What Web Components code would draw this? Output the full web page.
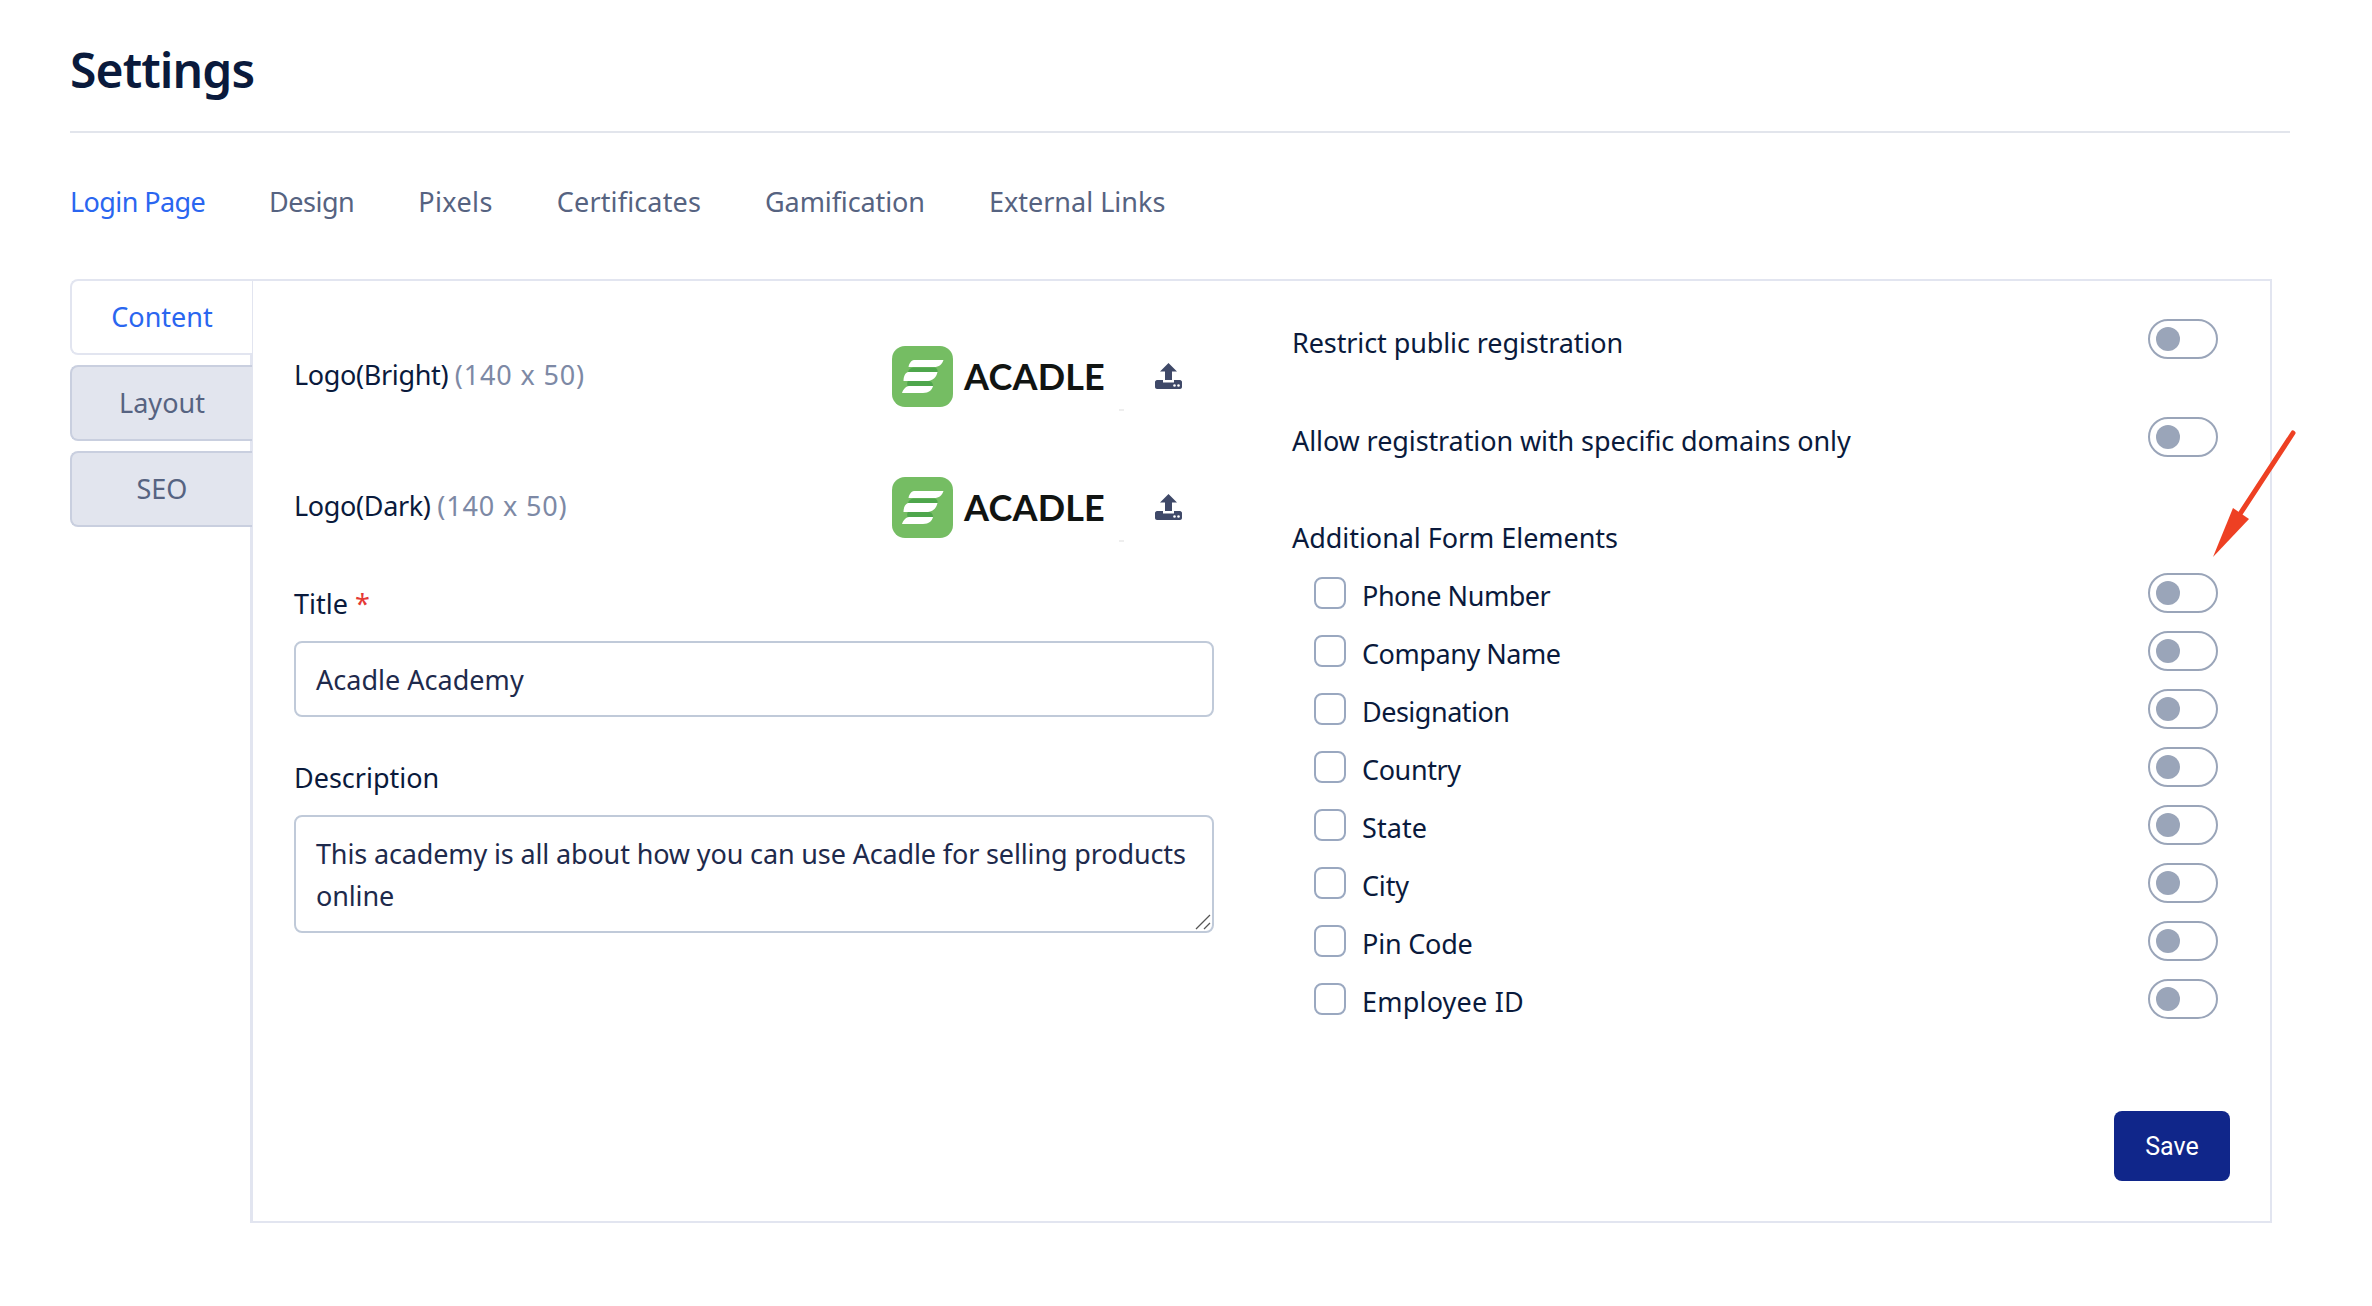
<!DOCTYPE html>
<html>
<head>
<meta charset="utf-8">
<title>Settings</title>
<style>
html, body { margin: 0; padding: 0; background: #fff; }
body { font-family: "Noto Sans", "Liberation Sans", sans-serif; font-size: 27px; color: #0a1a3c; }
</style>
</head>
<body>
<settings-page>
  <span slot="title">Settings</span>
  <nav-link slot="nav" active style="letter-spacing:-.6px">Login Page</nav-link>
  <nav-link slot="nav" style="letter-spacing:-.5px">Design</nav-link>
  <nav-link slot="nav" style="letter-spacing:.4px">Pixels</nav-link>
  <nav-link slot="nav" style="letter-spacing:.15px">Certificates</nav-link>
  <nav-link slot="nav" style="letter-spacing:-.1px">Gamification</nav-link>
  <nav-link slot="nav" style="letter-spacing:0">External Links</nav-link>

  <side-tab slot="side" active>Content</side-tab>
  <side-tab slot="side">Layout</side-tab>
  <side-tab slot="side">SEO</side-tab>

  <logo-row slot="left" hint="(140 x 50)">Logo(Bright)</logo-row>
  <logo-row slot="left" hint="(140 x 50)">Logo(Dark)</logo-row>
  <text-field slot="left" label="Title" required>Acadle Academy</text-field>
  <text-field slot="left" label="Description" multiline>This academy is all about how you can use Acadle for selling products online</text-field>

  <option-row slot="right" plain>Restrict public registration</option-row>
  <option-row slot="right" plain>Allow registration with specific domains only</option-row>
  <form-heading slot="right">Additional Form Elements</form-heading>
  <option-row slot="right" style="letter-spacing:-.45px">Phone Number</option-row>
  <option-row slot="right" style="letter-spacing:-.45px">Company Name</option-row>
  <option-row slot="right" style="letter-spacing:-.5px">Designation</option-row>
  <option-row slot="right" style="letter-spacing:-.4px">Country</option-row>
  <option-row slot="right" style="letter-spacing:.1px">State</option-row>
  <option-row slot="right" style="letter-spacing:-.2px">City</option-row>
  <option-row slot="right" style="letter-spacing:-.2px">Pin Code</option-row>
  <option-row slot="right" style="letter-spacing:.2px">Employee ID</option-row>

  <save-button slot="footer">Save</save-button>
</settings-page>

<script>
(function(){

function define(name, css, html, setup) {
    class El extends HTMLElement {
        constructor() {
            super();
            this.attachShadow({mode:'open'});
            this.shadowRoot.innerHTML = `<style>${css}</style>${html}`;
        }
        connectedCallback() {
            if (setup) setup.call(this, this.shadowRoot);
        }
    }
    customElements.define(name, El);
}

define('settings-page', `
    :host { display: block; position: relative; width: 2372px; height: 1306px; box-sizing: border-box; padding: 0 82px 0 70px; }
    header { height: 131px; border-bottom: 2px solid #e2e5ec; box-sizing: content-box; }
    h1 { margin: 0; padding-top: 42px; font-size: 48px; line-height: 56px; font-weight: 600; color: #0a1a3c; letter-spacing: -.9px; }
    nav { display: flex; gap: 64px; height: 146px; padding-top: 51px; box-sizing: border-box; }
    .body { display: flex; margin-right: 18px; height: 944px; }
    .side { width: 180px; flex: none; display: flex; flex-direction: column; gap: 10px; }
    .panel { flex: 1; border: 2px solid #e2e5f0; border-left-width: 3px; display: flex; flex-direction: column; padding: 0 40px 40px 41px; box-sizing: border-box; }
    .form { display: grid; grid-template-columns: 920px 1fr; column-gap: 78px; }
    .left { padding-top: 65px; display: flex; flex-direction: column; }
    .right { padding: 38px 12px 0 0; display: flex; flex-direction: column; }
    .foot { margin-top: auto; display: flex; justify-content: flex-end; }
    svg.arrow { position: absolute; left: 2200px; top: 420px; pointer-events: none; }
`, `
    <header><h1><slot name="title"></slot></h1></header>
    <nav><slot name="nav"></slot></nav>
    <div class="body">
        <div class="side"><slot name="side"></slot></div>
        <div class="panel">
            <div class="form">
                <div class="left"><slot name="left"></slot></div>
                <div class="right"><slot name="right"></slot></div>
            </div>
            <div class="foot"><slot name="footer"></slot></div>
        </div>
    </div>
    <svg class="arrow" width="100" height="145" viewBox="2200 420 100 145">
        <line x1="2293" y1="433" x2="2240" y2="514" stroke="#ee4023" stroke-width="5" stroke-linecap="round"/>
        <polygon points="2213,557 2233,508 2249,519" fill="#ee4023"/>
    </svg>
`);

define('nav-link', `
    :host { display: block; font-size: 27px; line-height: 36px; color: #566381; }
    :host([active]) { color: #2a66f0; }
`, `<slot></slot>`);

define('side-tab', `
    :host { display: block; position: relative; width: 182px; height: 76px; box-sizing: border-box; line-height: 72px; text-align: center; font-size: 27px;
        background: #e2e5ee; color: #566381; border: 2px solid #c9cfdf; border-right: 0; border-radius: 8px 0 0 8px; }
    :host([active]) { background: #fff; color: #2a66f0; border-color: #e2e5f0; }
`, `<slot></slot>`);

define('acadle-logo', `
    :host { display: block; width: 214px; height: 61px; position: relative; }
    svg { display: block; }
    span { position: absolute; left: 72px; top: 3px; font: 700 36px/54px Lato, "Noto Sans", sans-serif; color: #111412; letter-spacing: .2px; }
    i { position: absolute; left: 227px; top: 63px; width: 5px; height: 2px; background: #eee; }
`, `
    <svg width="61" height="61" viewBox="0 0 61 61">
        <rect width="61" height="61" rx="13" fill="#75bd63"/>
        <path d="M22 14H51.500C50 18.500 47 21 42 21H16.500C17 17.500 19 14.500 22 14Z" fill="#fff"/>
        <path d="M21 21.500H43C45 22 46 24.500 45.500 26H16C16.500 24 18 22 21 21.500Z" fill="#4ea64c"/>
        <path d="M16 26H45.500C44.500 31 41 34.500 36 35H11.500C11.500 30.500 13 27 16 26Z" fill="#fff"/>
        <path d="M16 35H37C39.500 35 41 37.500 41 40H15.500C15 37.500 15 36 16 35Z" fill="#4ea64c"/>
        <path d="M17 40H41C40 44 37 47 31 47H10C11 43.500 13.500 40.500 17 40Z" fill="#fff"/>
    </svg>
    <span>ACADLE</span><i></i>
`);

define('upload-icon', `
    :host { display: block; width: 27px; height: 26px; }
    svg { display: block; }
`, `
    <svg width="27" height="26" viewBox="0 0 27 26">
        <path d="M13.500 0L22 8.500H17V17H10V8.500H5Z" fill="#3f4968"/>
        <path d="M2 17H8V19.500H19V17H25C26 17 27 18 27 19V24C27 25 26 26 25 26H2C1 26 0 25 0 24V19C0 18 1 17 2 17Z" fill="#3f4968"/>
        <circle cx="19.500" cy="22.500" r="1.300" fill="#fff"/>
        <circle cx="23.500" cy="22.500" r="1.300" fill="#fff"/>
    </svg>
`);

define('logo-row', `
    :host { display: flex; align-items: center; height: 61px; margin-bottom: 70px; }
    .txt { width: 598px; flex: none; font-size: 27px; line-height: 36px; margin-top: -4px; color: #0a1a3c; letter-spacing: -.35px; }
    .hint { color: #7d89a5; letter-spacing: .85px; }
    acadle-logo { margin-right: 49px; }
    upload-icon { margin-top: -2px; }
`, `
    <div class="txt"><slot></slot> <span class="hint"></span></div>
    <acadle-logo></acadle-logo>
    <upload-icon></upload-icon>
`, function(root){
    root.querySelector('.hint').textContent = this.getAttribute('hint');
});

define('text-field', `
    :host { display: block; margin-bottom: 41px; margin-top: -24px; }
    :host([multiline]) { margin-top: 0; }
    label { display: block; font-size: 27px; line-height: 40px; margin-bottom: 17px; color: #0a1a3c; }
    b { font-weight: 400; color: #e53935; }
    .box { box-sizing: border-box; width: 920px; height: 76px; border: 2px solid #c0cad9; border-radius: 8px; padding: 0 20px; font-size: 27px; line-height: 73px; color: #1e2a4c; position: relative; letter-spacing: .02px; }
    :host([multiline]) .box { height: 118px; line-height: 42px; padding-top: 16px; letter-spacing: -.14px; }
    svg { position: absolute; right: 1px; bottom: 1px; display: none; }
    :host([multiline]) svg { display: block; }
`, `
    <label><span class="lbl"></span><b></b></label>
    <div class="box"><slot></slot>
        <svg width="16" height="16" viewBox="0 0 16 16"><path d="M15 1L1 15M15 9L9 15" stroke="#555" stroke-width="1.300" fill="none"/></svg>
    </div>
`, function(root){
    root.querySelector('.lbl').textContent = this.getAttribute('label');
    if (this.hasAttribute('required')) root.querySelector('b').textContent = ' *';
});

define('toggle-switch', `
    :host { display: block; flex: none; width: 70px; height: 40px; box-sizing: border-box; border: 2px solid #9aa5b9; border-radius: 20px; position: relative; }
    i { position: absolute; left: 6px; top: 6px; width: 24px; height: 24px; border-radius: 50%; background: #9aa5b9; }
`, `<i></i>`);

define('option-row', `
    :host { display: flex; align-items: center; height: 40px; margin-bottom: 18px; letter-spacing: -.2px; }
    :host([plain]) { margin-bottom: 58px; letter-spacing: -.1px; }
    .check { width: 32px; height: 32px; box-sizing: border-box; border: 2px solid #9aa8c0; border-radius: 8px; margin-left: 22px; margin-right: 16px; flex: none; }
    :host([plain]) .check { display: none; }
    .txt { flex: 1; font-size: 27px; line-height: 36px; margin-top: 6px; color: #0a1a3c; }
    :host([plain]) .txt { margin-top: 7px; }
`, `<span class="check"></span><div class="txt"><slot></slot></div><toggle-switch></toggle-switch>`);

define('form-heading', `
    :host { display: block; font-size: 27px; line-height: 40px; margin: 3px 0 15px; color: #0a1a3c; letter-spacing: -.05px; }
`, `<slot></slot>`);

define('save-button', `
    :host { display: block; width: 116px; height: 70px; background: #10268a; color: #fff; border-radius: 8px; font: 400 25px/71px Roboto, sans-serif; text-align: center; }
`, `<slot></slot>`);

})();
</script>
</body>
</html>
